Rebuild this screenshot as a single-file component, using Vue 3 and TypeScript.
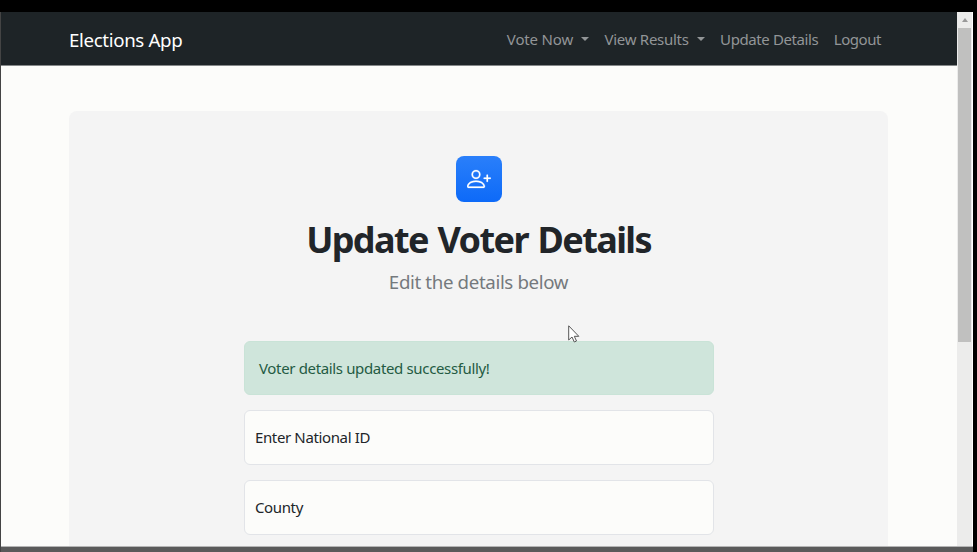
<script setup lang="ts">
interface NavItem {
  label: string
  kind: string
  dropdown: boolean
}

const navItems: NavItem[] = [
  { label: 'Vote Now', kind: 'vote', dropdown: true },
  { label: 'View Results', kind: 'results', dropdown: true },
  { label: 'Update Details', kind: 'update', dropdown: false },
  { label: 'Logout', kind: 'logout', dropdown: false },
]

const fields: string[] = ['Enter National ID', 'County']
</script>

<template>
  <div class="screen">
    <div class="viewport">
      <div class="page">
        <nav class="navbar">
          <a class="brand"><span>Elections App</span></a>
          <ul class="links">
            <li v-for="item in navItems" :key="item.label" :class="['link', item.kind]">
              <span class="label">{{ item.label }}</span>
              <i v-if="item.dropdown" class="caret"></i>
            </li>
          </ul>
        </nav>
        <main class="card">
          <div class="feature">
            <svg viewBox="0 0 16 16" width="24" height="24" fill="#fff" stroke="#fff" stroke-width="0.15">
              <path d="M6 8a3 3 0 1 0 0-6 3 3 0 0 0 0 6m2-3a2 2 0 1 1-4 0 2 2 0 0 1 4 0m4 8c0 1-1 1-1 1H1s-1 0-1-1 1-4 6-4 6 3 6 4m-1-.004c-.001-.246-.154-.986-.832-1.664C9.516 10.68 8.289 10 6 10s-3.516.68-4.168 1.332c-.678.678-.83 1.418-.832 1.664z" />
              <path fill-rule="evenodd" d="M13.5 5a.5.5 0 0 1 .5.5V7h1.500a.5.5 0 0 1 0 1H14v1.500a.5.5 0 0 1-1 0V8h-1.500a.5.5 0 0 1 0-1H13V5.500a.5.5 0 0 1 .5-.5" />
            </svg>
          </div>
          <h1><span>Update Voter Details</span></h1>
          <p class="lead"><span>Edit the details below</span></p>
          <form class="form">
            <div class="alert"><span>Voter details updated successfully!</span></div>
            <div v-for="field in fields" :key="field" class="field"><span>{{ field }}</span></div>
          </form>
        </main>
      </div>
      <div class="scrollbar">
        <div class="arrow"></div>
        <div class="thumb"></div>
      </div>
    </div>
    <div class="bottom-edge"></div>
    <svg class="cursor" viewBox="0 0 12 18" width="12" height="18">
      <path d="M.7.8V15l3.300-3 2.300 5 2.200-1-2.200-4.700h4.500z" fill="#fff" stroke="#555" stroke-width="1" />
    </svg>
  </div>
</template>

<style>
body {
  margin: 0;
  background: #000;
}
</style>

<style scoped>
.screen {
  position: relative;
  box-sizing: border-box;
  width: 977px;
  height: 552px;
  padding: 12px 4px 0 1px;
  overflow: hidden;
  background: linear-gradient(90deg, #444 1px, #000 1px);
  display: flex;
  flex-direction: column;
  font-family: 'Noto Sans', 'Open Sans', sans-serif;
  font-size: 15px;
  line-height: 23px;
  color: #212529;
}
.screen::before {
  content: '';
  position: absolute;
  left: 0;
  top: 0;
  width: 1px;
  height: 12px;
  background: #000;
}
.screen span {
  white-space: nowrap;
}
.viewport {
  display: flex;
  height: 535px;
  overflow: hidden;
}
.page {
  width: 956px;
  background: #fcfcfa;
}
.navbar {
  box-sizing: border-box;
  height: 54px;
  padding: 1px 76px 0 68px;
  display: flex;
  align-items: center;
  justify-content: space-between;
  background: #1e2427;
  border-bottom: 1px solid #858889;
}
.brand {
  color: #fff;
  font-size: 18.700px;
  letter-spacing: -0.35px;
}
.links {
  display: flex;
  gap: 15.500px;
  margin: 0;
  padding: 0;
  list-style: none;
  color: #929597;
}
.link {
  display: flex;
  align-items: center;
}
.vote {
  letter-spacing: -0.17px;
}
.results {
  letter-spacing: -0.28px;
}
.update {
  letter-spacing: -0.4px;
}
.logout {
  letter-spacing: -0.45px;
}
.caret {
  margin-left: 8px;
  border: 4.500px solid transparent;
  border-top-color: currentColor;
  border-bottom: 0;
}
.card {
  box-sizing: border-box;
  width: 819px;
  height: 600px;
  margin: 45px 0 0 68px;
  padding-top: 45px;
  display: flex;
  flex-direction: column;
  align-items: center;
  background: #f4f4f4;
  border-radius: 8px;
}
.feature {
  width: 46px;
  height: 46px;
  display: flex;
  align-items: center;
  justify-content: center;
  border-radius: 8px;
  background: linear-gradient(#2a7ffa, #0d6af8);
}
h1 {
  margin: 15px 0 0;
  font-size: 36px;
  line-height: 46px;
  font-weight: 700;
  letter-spacing: -1.62px;
  word-spacing: 2px;
}
.lead {
  margin: 4px 0 0;
  font-size: 18.700px;
  line-height: 29px;
  color: #74797d;
  letter-spacing: -0.36px;
}
.form {
  width: 470px;
  margin-top: 45px;
  display: flex;
  flex-direction: column;
}
.alert {
  box-sizing: border-box;
  height: 54px;
  padding: 0 14.500px;
  display: flex;
  align-items: center;
  color: #245b43;
  background: #cfe5db;
  border: 1px solid #c9e3d7;
  border-radius: 6px;
  letter-spacing: -0.35px;
}
.field {
  box-sizing: border-box;
  height: 55px;
  margin-top: 15px;
  padding: 0 0 0 10.500px;
  display: flex;
  align-items: center;
  background: #fcfcfa;
  border: 1px solid #e2e4e8;
  border-radius: 6px;
  letter-spacing: -0.37px;
}
.scrollbar {
  width: 16px;
  box-sizing: border-box;
  padding: 0 1px;
  background: #ececeb;
  border-right: 1px solid #fff;
  display: flex;
  flex-direction: column;
  align-items: center;
}
.arrow {
  width: 14px;
  height: 16px;
  display: flex;
  align-items: center;
  justify-content: center;
}
.arrow::before {
  content: '';
  border: 3.500px solid transparent;
  border-bottom: 4px solid #999;
  border-top: 0;
}
.thumb {
  width: 13px;
  height: 314px;
  background: #c0c0bf;
}
.bottom-edge {
  height: 5px;
  background: #5a5a5a;
  border-top: 1px solid #b5b5b5;
}
.cursor {
  position: absolute;
  left: 568px;
  top: 325px;
}
</style>
